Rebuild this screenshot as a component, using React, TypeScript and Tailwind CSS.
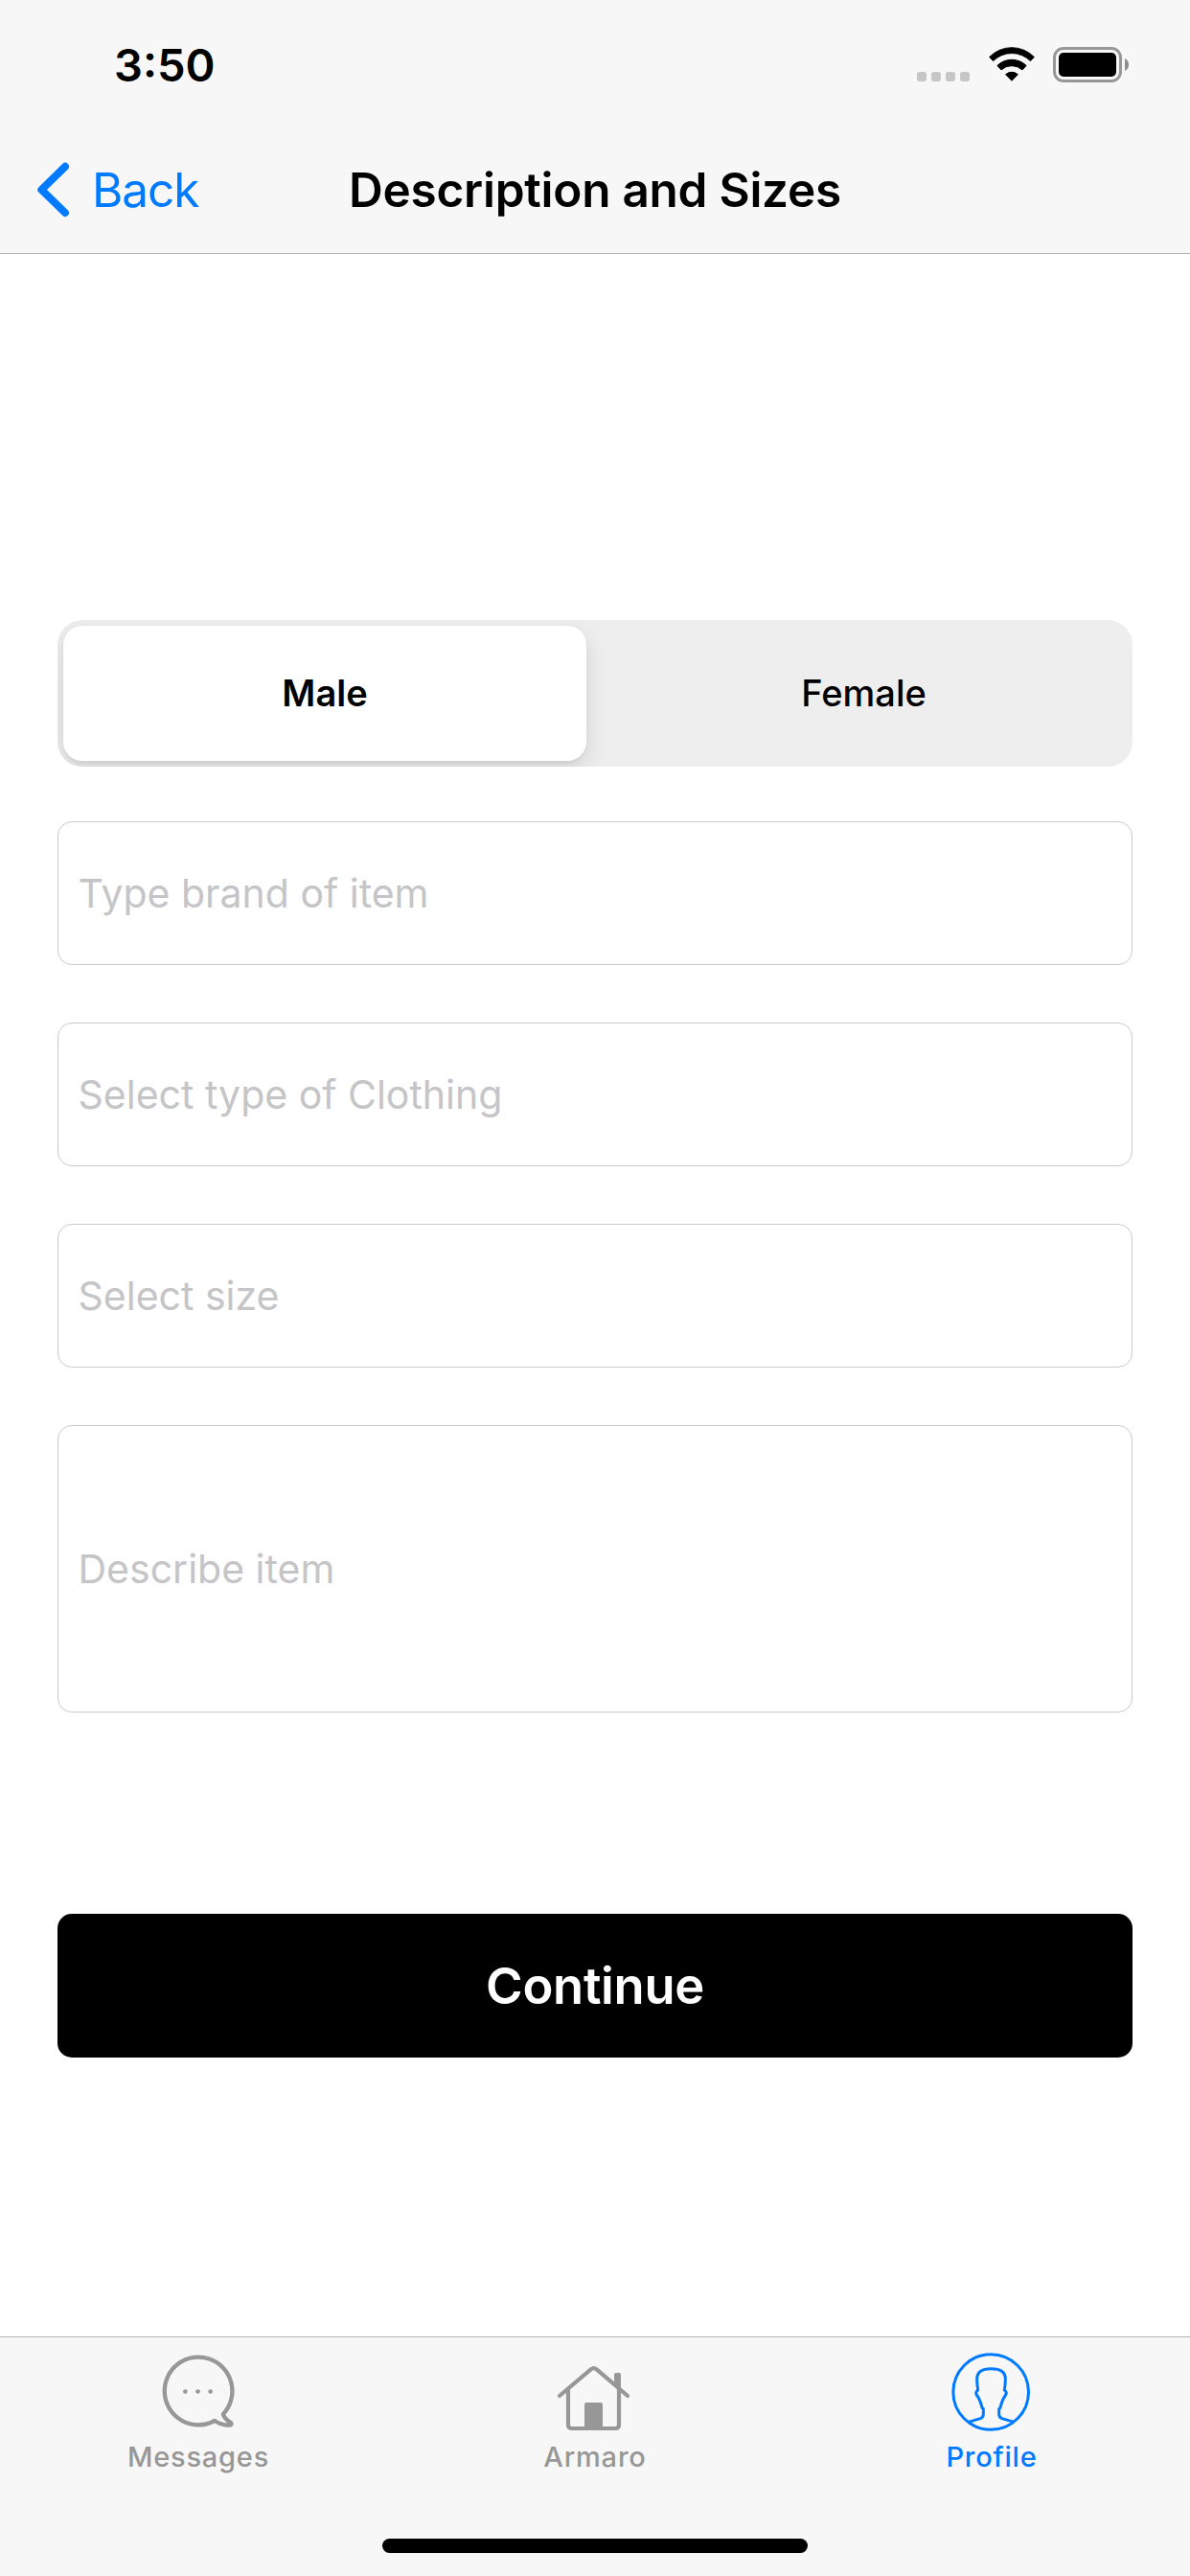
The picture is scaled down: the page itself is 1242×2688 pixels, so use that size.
import React from "react";

function StatusBar() {
  return (
    <div className="flex h-[132px] items-start justify-between pr-[64px] pl-[119px]">
      <span className="mt-[39px] text-[47px] leading-[57px] font-semibold text-black">3:50</span>
      <div className="mt-[49px] flex h-[37px]">
        <div className="mt-[26px] flex gap-[5px]">
          <i className="size-[10px] rounded-[3px] bg-[#c6c6c6]" />
          <i className="size-[10px] rounded-[3px] bg-[#c6c6c6]" />
          <i className="size-[10px] rounded-[3px] bg-[#c6c6c6]" />
          <i className="size-[10px] rounded-[3px] bg-[#c6c6c6]" />
        </div>
        <svg className="ml-[19.5px] h-[36px] w-[48px]" viewBox="0 0 48 36" fill="#000" stroke="#000" strokeWidth="1" strokeLinejoin="round">
          <path d="M.7 10.5A32.6 32.6 0 0 1 47.3 10.5L43.5 14.6A27.6 27.6 0 0 0 4.5 14.6Z" />
          <path d="M8.9 19.4A21.7 21.7 0 0 1 39.1 19.4L35 23.9A16.4 16.4 0 0 0 13 23.9Z" />
          <path d="M17.6 28.7A9.6 9.6 0 0 1 30.4 28.7L24 35.2Z" />
        </svg>
        <div className="ml-[19.5px] h-[37px] w-[72px] rounded-[11px] border-[3px] border-[#979797] p-[3px]">
          <div className="h-[25px] w-[60px] rounded-[5px] bg-black" />
        </div>
        <svg className="mt-[12px] ml-[3px] h-[13px] w-[4px]" viewBox="0 0 4 13" fill="#8c8c8c">
          <path d="M0 0Q4 2 4 6.5T0 13Z" />
        </svg>
      </div>
    </div>
  );
}

function NavBar() {
  return (
    <div className="grid h-[132px] grid-cols-[1fr_auto_1fr] items-center text-[49.5px] leading-[60px]">
      <button className="flex items-center text-[#007aff]">
        <svg className="ml-[36px] h-[60px] w-[40px]" viewBox="0 0 40 60" fill="none" stroke="currentColor" strokeWidth="8" strokeLinecap="round" strokeLinejoin="round">
          <path d="M32 5.8L7.3 30L32 54" />
        </svg>
        <span className="ml-[20px] tracking-[-1.1px]">Back</span>
      </button>
      <h1 className="font-semibold tracking-[-0.25px] text-black">Description and Sizes</h1>
      <span />
    </div>
  );
}

function Segmented() {
  return (
    <div className="grid h-[153px] grid-cols-2 overflow-hidden rounded-[26px] bg-[#eeeeee] text-[38px] leading-[46px] text-black">
      <button className="mt-[6px] mr-[9px] mb-[6px] ml-[6px] rounded-[20px] bg-white pb-[2px] font-[560] shadow-[0_9px_24px_rgba(0,0,0,0.12),0_3px_3px_rgba(0,0,0,0.04)]">
        Male
      </button>
      <button className="pb-[2px] font-[460]">Female</button>
    </div>
  );
}

function Field({ label, tall = false }: { label: string; tall?: boolean }) {
  return (
    <div
      className={
        "flex items-center rounded-[15px] border border-[#cacaca] bg-white pl-[20.5px] text-[41px] leading-[50px] text-[#c5c5c7] " +
        (tall ? "h-[300px]" : "h-[150px]")
      }
    >
      {label}
    </div>
  );
}

function MessagesIcon() {
  return (
    <svg className="h-[88px] w-[96px]" viewBox="147 96 288 264" fill="none" stroke="currentColor" strokeWidth="13" strokeLinejoin="round">
      <path d="M342 318A106 106 0 1 1 369 297C371 308 383 318 393 324Q397 331 390 332Q365 333 342 318Z" />
      <g fill="currentColor" stroke="none">
        <circle cx="250" cy="226.5" r="7" />
        <circle cx="289.5" cy="226.5" r="7" />
        <circle cx="329" cy="226.5" r="7" />
      </g>
    </svg>
  );
}

function HomeIcon() {
  return (
    <svg className="h-[88px] w-[96px]" viewBox="99 96 288 264" fill="none" stroke="currentColor" strokeWidth="12.5" strokeLinecap="round" strokeLinejoin="round">
      <path d="M132 240L230 157Q239 150 248 157L345 240" />
      <path strokeLinecap="butt" d="M159 216V330Q159 342 171 342H306Q318 342 318 330V216" />
      <path fill="currentColor" stroke="none" d="M303 173Q303 168 308 168H319Q324 168 324 173V224L303 206Z" />
      <path fill="currentColor" stroke="none" d="M210 345V267Q210 261 216 261H261Q267 261 267 267V345Z" />
    </svg>
  );
}

function ProfileIcon() {
  return (
    <svg className="h-[88px] w-[96px]" viewBox="81 96 288 264" fill="none" stroke="currentColor" strokeWidth="9" strokeLinejoin="round">
      <circle cx="222.5" cy="228" r="118" />
      <path d="M152 322Q166 318 190 311Q199 307 199 298V281L195 277Q189 252 178 237Q173 228 182 222Q179 205 179 187Q179 155 223.5 155Q268 155 268 187Q268 205 265 222Q274 228 269 237Q258 252 252 277L248 281V298Q248 307 257 311Q281 318 295 322" />
    </svg>
  );
}

function Tab({ icon, label, active = false }: { icon: React.ReactNode; label: string; active?: boolean }) {
  return (
    <button className={"flex flex-col items-center pt-[13px] " + (active ? "text-[#007aff]" : "text-[#979797]")}>
      {icon}
      <span className="mt-[6px] text-[29px] leading-[35px] font-medium tracking-[0.8px]">{label}</span>
    </button>
  );
}

export default function App() {
  return (
    <div className="flex h-[2688px] w-[1242px] flex-col bg-white font-['Inter',sans-serif]">
      <header className="h-[265px] border-b border-[#b2b2b2] bg-[#f7f7f7]">
        <StatusBar />
        <NavBar />
      </header>

      <main className="flex flex-1 flex-col px-[60px] pt-[382px]">
        <Segmented />
        <div className="mt-[57px] flex flex-col gap-[60px]">
          <Field label="Type brand of item" />
          <Field label="Select type of Clothing" />
          <Field label="Select size" />
          <Field label="Describe item" tall />
        </div>
        <button className="mt-[210px] h-[150px] rounded-[15px] bg-black text-[52.5px] leading-[64px] font-semibold tracking-[-0.3px] text-white">
          Continue
        </button>
      </main>

      <footer className="flex h-[250px] flex-col items-center border-t border-[#b2b2b2] bg-[#f7f7f7]">
        <nav className="grid w-full grid-cols-3">
          <Tab icon={<MessagesIcon />} label="Messages" />
          <Tab icon={<HomeIcon />} label="Armaro" />
          <Tab icon={<ProfileIcon />} label="Profile" active />
        </nav>
        <div className="mt-[68px] h-[15px] w-[444px] rounded-full bg-black" />
      </footer>
    </div>
  );
}
